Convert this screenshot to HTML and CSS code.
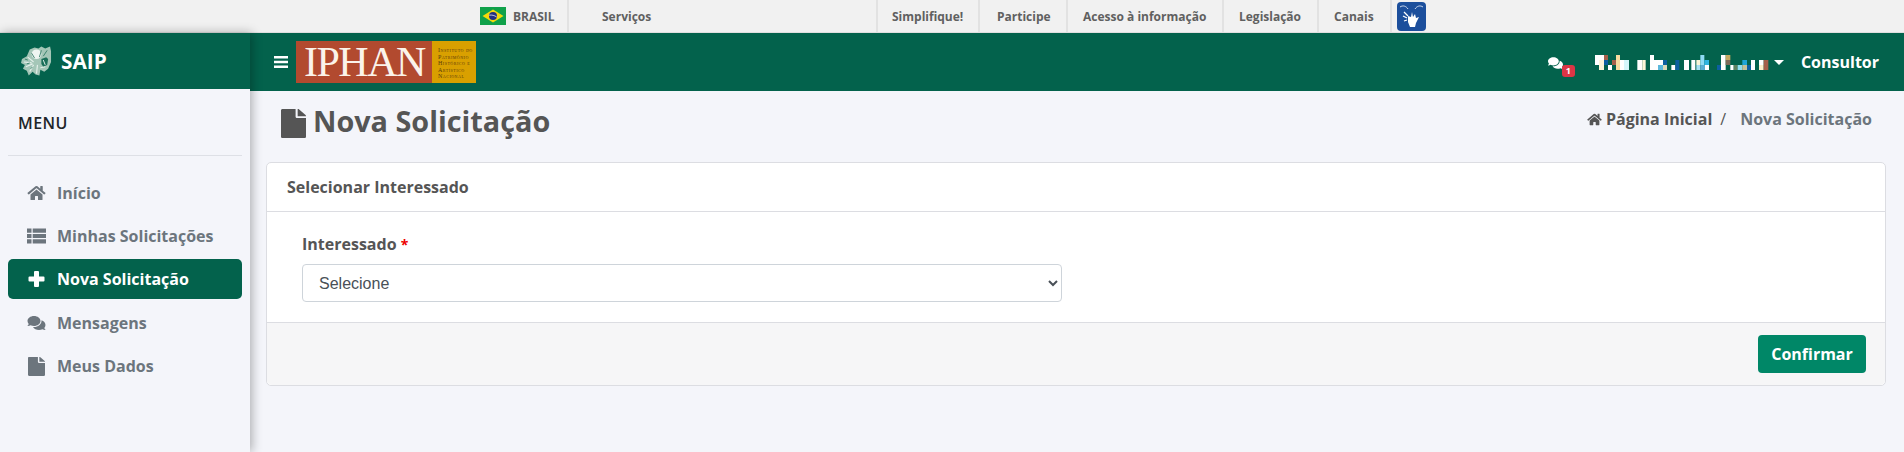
FILE: index.html
```html
<!DOCTYPE html>
<html lang="pt-BR">

<head>
    <meta charset="UTF-8">
    <title>SAIP - Nova Solicitação</title>
    <link rel="stylesheet" href="styles.css">
</head>

<body>
    <!-- barra do governo -->
    <nav class="gov-bar">
        <div class="gov-brasil">
            <svg class="flag" viewBox="0 0 26 18">
                <rect width="26" height="18" fill="#10a14a"></rect>
                <polygon points="13,2.5 23.5,9 13,15.5 2.5,9" fill="#f5d90a"></polygon>
                <circle cx="13" cy="9" r="4" fill="#23307f"></circle>
                <path d="M9.2 8.2c2.6-.4 5.4.2 7.5 1.8" stroke="#fff" stroke-width=".7" fill="none"></path>
            </svg>
            <span>BRASIL</span>
        </div>
        <a class="gov-item gov-servicos">Serviços</a>
        <a class="gov-item gov-w1">Simplifique!</a>
        <a class="gov-item gov-w2">Participe</a>
        <a class="gov-item gov-w3">Acesso à informação</a>
        <a class="gov-item gov-w4">Legislação</a>
        <a class="gov-item gov-w5">Canais</a>
        <svg class="libras" viewBox="0 0 29 29">
            <rect width="29" height="29" rx="4" fill="#1c4f9c"></rect>
            <path d="M3 5c3-2 6-1 8 2M26 5c-3-2-6-1-8 2" stroke="#dfe8f5" stroke-width=".9" fill="none"></path>
            <path d="M11 14l3 1 1-5 1 5 2-3 1 4 3-1-3 6-1 4h-5l-2-5z" fill="#fff"></path>
            <path d="M7 10l4 4M6 14l4 2M7 19l3-1" stroke="#fff" stroke-width="1.3"></path>
        </svg>
    </nav>

    <div class="app">
        <aside class="sidebar">
            <div class="brand">
                <svg class="brand-logo" viewBox="0 0 32 32">
                    <polygon points="1,14 6,11 9,4 14,2 18,3 21,1 25,3 30,1 31,6 31,17 28,24 24,27 20,25 19,31 15,30 12,27 8,31 6,26 2,24 4,20 0,18" fill="#a4c6b7"></polygon>
                    <circle cx="16" cy="9" r="5" fill="#eef5f1"></circle>
                    <path d="M3 17l8 1M5 22l7-3M9 27l4-7M7 12l6 5M16 29l1-9" stroke="#e3efe9" stroke-width="1.2" fill="none"></path>
                    <path d="M4 14l3 1M6 19l3-1M10 24l2-2M11 8l3 5M21 5l-2 7M27 5l-4 6" stroke="#2f7a64" stroke-width=".9" fill="none"></path>
                    <polygon points="21,14 26,12 28,14 27,20 23,22 21,19" fill="#1a6f59"></polygon>
                    <path d="M23 15l2 5M20 23l5-1" stroke="#e3efe9" stroke-width="1"></path>
                </svg>
                <span>SAIP</span>
            </div>
            <div class="menu-title">MENU</div>
            <ul class="menu">
                <li>
                    <svg class="menu-icon" viewBox="0 0 576 512"><path d="M280.37 148.26L96 300.11V464a16 16 0 0 0 16 16l112.06-.29a16 16 0 0 0 15.92-16V368a16 16 0 0 1 16-16h64a16 16 0 0 1 16 16v95.64a16 16 0 0 0 16 16.05L464 480a16 16 0 0 0 16-16V300L295.67 148.26a12.19 12.19 0 0 0-15.3 0zM571.6 251.47L488 182.56V44.05a12 12 0 0 0-12-12h-56a12 12 0 0 0-12 12v72.61L318.47 43a48 48 0 0 0-61 0L4.34 251.47a12 12 0 0 0-1.6 16.9l25.5 31A12 12 0 0 0 45.15 301l235.22-193.74a12.19 12.19 0 0 1 15.3 0L530.9 301a12 12 0 0 0 16.9-1.6l25.5-31a12 12 0 0 0-1.7-16.93z"></path></svg>
                    Início
                </li>
                <li>
                    <svg class="menu-icon" viewBox="0 0 19 16"><path d="M0 .5h4.5v4.2H0zM5.700 .5H19v4.200H5.700zM0 5.900h4.500v4.200H0zM5.700 5.900H19v4.200H5.700zM0 11.300h4.500v4.200H0zM5.700 11.300H19v4.200H5.700z"></path></svg>
                    Minhas Solicitações
                </li>
                <li class="active">
                    <svg class="menu-icon" viewBox="0 0 19 16"><path d="M8 0h3a1 1 0 0 1 1 1v4.500h4.500a1 1 0 0 1 1 1v3a1 1 0 0 1-1 1H12V15a1 1 0 0 1-1 1H8a1 1 0 0 1-1-1v-4.500H2.500a1 1 0 0 1-1-1v-3a1 1 0 0 1 1-1H7V1a1 1 0 0 1 1-1z"></path></svg>
                    Nova Solicitação
                </li>
                <li>
                    <svg class="menu-icon" viewBox="0 0 576 512"><path d="M416 192c0-88.4-93.1-160-208-160S0 103.6 0 192c0 34.3 14.1 65.9 38 92-13.4 30.2-35.5 54.2-35.8 54.5-2.2 2.3-2.8 5.7-1.5 8.7S4.8 352 8 352c36.6 0 66.9-12.3 88.7-25 32.2 15.7 70.3 25 111.3 25 114.9 0 208-71.6 208-160zm122 220c23.9-26 38-57.7 38-92 0-66.9-53.5-124.2-129.3-148.1.9 6.6 1.3 13.3 1.3 20.1 0 105.9-107.7 192-240 192-10.8 0-21.3-.8-31.7-1.9C207.8 439.6 281.8 480 368 480c41 0 79.1-9.2 111.3-25 21.8 12.7 52.1 25 88.7 25 3.2 0 6.1-1.9 7.3-4.8 1.3-2.9.7-6.3-1.5-8.7-.3-.3-22.4-24.2-35.8-54.5z"></path></svg>
                    Mensagens
                </li>
                <li>
                    <svg class="menu-icon icon-file" viewBox="0 0 384 512" preserveAspectRatio="none"><path d="M224 136V0H24C10.7 0 0 10.7 0 24v464c0 13.3 10.7 24 24 24h336c13.3 0 24-10.7 24-24V160H248c-13.2 0-24-10.8-24-24zm160-14.1v6.1H256V0h6.1c6.4 0 12.5 2.5 17 7l97.9 98c4.5 4.5 7 10.6 7 16.9z"></path></svg>
                    Meus Dados
                </li>
            </ul>
        </aside>

        <div class="main">
            <header class="topbar">
                <svg class="burger" viewBox="0 0 14 12"><path d="M0 0h14v2.4H0zM0 4.8h14v2.4H0zM0 9.6h14V12H0z"></path></svg>
                <div class="iphan">
                    <span class="iphan-name">IPHAN</span>
                    <span class="iphan-desc">Instituto do<br>Patrimônio<br>Histórico e<br>Artístico<br>Nacional</span>
                </div>
                <div class="topbar-right">
                    <div class="chat">
                        <svg class="chat-icon" viewBox="0 0 576 512"><path d="M416 192c0-88.4-93.1-160-208-160S0 103.6 0 192c0 34.3 14.1 65.9 38 92-13.4 30.2-35.5 54.2-35.8 54.5-2.2 2.3-2.8 5.7-1.5 8.7S4.8 352 8 352c36.6 0 66.9-12.3 88.7-25 32.2 15.7 70.3 25 111.3 25 114.9 0 208-71.6 208-160zm122 220c23.9-26 38-57.7 38-92 0-66.9-53.5-124.2-129.3-148.1.9 6.6 1.3 13.3 1.3 20.1 0 105.9-107.7 192-240 192-10.8 0-21.3-.8-31.7-1.9C207.8 439.6 281.8 480 368 480c41 0 79.1-9.2 111.3-25 21.8 12.7 52.1 25 88.7 25 3.2 0 6.1-1.9 7.3-4.8 1.3-2.9.7-6.3-1.5-8.7-.3-.3-22.4-24.2-35.8-54.5z"></path></svg>
                        <span class="badge">1</span>
                    </div>
                    <!-- nome borrado no original -->
                    <svg class="user-blur" width="176" height="16" viewBox="18 20 528 48">
                        <rect x="18" y="20" width="27" height="30" fill="#fff"></rect>
                        <rect x="30" y="35" width="15" height="30" fill="#fdf6d8"></rect>
                        <rect x="45" y="20" width="12" height="15" fill="#a5604a"></rect>
                        <rect x="45" y="35" width="12" height="15" fill="#0d5fa0"></rect>
                        <rect x="57" y="50" width="12" height="15" fill="#fff"></rect>
                        <rect x="69" y="35" width="12" height="15" fill="#a5604a"></rect>
                        <rect x="81" y="20" width="12" height="45" fill="#f7dca0"></rect>
                        <rect x="93" y="35" width="12" height="30" fill="#fff"></rect>
                        <rect x="105" y="35" width="15" height="30" fill="#d5f6fb"></rect>
                        <rect x="145" y="35" width="15" height="30" fill="#fff"></rect>
                        <rect x="160" y="35" width="10" height="30" fill="#fdf6d8"></rect>
                        <rect x="183" y="20" width="12" height="45" fill="#fff"></rect>
                        <rect x="195" y="35" width="12" height="30" fill="#fff"></rect>
                        <rect x="207" y="35" width="15" height="15" fill="#fff"></rect>
                        <rect x="222" y="35" width="12" height="15" fill="#0d5fa0"></rect>
                        <rect x="207" y="50" width="15" height="15" fill="#5cb8dc"></rect>
                        <rect x="222" y="50" width="12" height="15" fill="#dcd9b8"></rect>
                        <rect x="247" y="50" width="12" height="15" fill="#fff"></rect>
                        <rect x="259" y="35" width="12" height="30" fill="#0d5fa0"></rect>
                        <rect x="285" y="35" width="15" height="30" fill="#fff"></rect>
                        <rect x="307" y="35" width="12" height="30" fill="#fff"></rect>
                        <rect x="322" y="35" width="12" height="15" fill="#fdf6d8"></rect>
                        <rect x="334" y="20" width="12" height="30" fill="#8fdcf5"></rect>
                        <rect x="346" y="35" width="14" height="15" fill="#2fb4e0"></rect>
                        <rect x="322" y="50" width="12" height="15" fill="#a8e0f2"></rect>
                        <rect x="334" y="50" width="14" height="15" fill="#58aed2"></rect>
                        <rect x="348" y="50" width="12" height="15" fill="#fff"></rect>
                        <rect x="384" y="50" width="12" height="15" fill="#0d5fa0"></rect>
                        <rect x="396" y="20" width="14" height="45" fill="#fff"></rect>
                        <rect x="410" y="20" width="14" height="15" fill="#c4a860"></rect>
                        <rect x="410" y="35" width="14" height="15" fill="#7d6a5a"></rect>
                        <rect x="424" y="50" width="10" height="15" fill="#fff"></rect>
                        <rect x="434" y="50" width="12" height="15" fill="#5f8260"></rect>
                        <rect x="446" y="50" width="14" height="15" fill="#90dcef"></rect>
                        <rect x="460" y="35" width="14" height="15" fill="#1ea4d8"></rect>
                        <rect x="460" y="50" width="14" height="15" fill="#c4c09a"></rect>
                        <rect x="474" y="50" width="12" height="15" fill="#0d5fa0"></rect>
                        <rect x="486" y="35" width="12" height="30" fill="#fff"></rect>
                        <rect x="510" y="35" width="14" height="15" fill="#fff"></rect>
                        <rect x="510" y="50" width="14" height="15" fill="#fdf0cc"></rect>
                        <rect x="524" y="35" width="14" height="30" fill="#a5604a"></rect>
                    </svg>
                    <span class="caret"></span>
                    <span class="role">Consultor</span>
                </div>
            </header>

            <div class="page-head">
                <h1>
                    <svg class="title-icon" viewBox="0 0 384 512" preserveAspectRatio="none"><path d="M224 136V0H24C10.7 0 0 10.7 0 24v464c0 13.3 10.7 24 24 24h336c13.3 0 24-10.7 24-24V160H248c-13.2 0-24-10.8-24-24zm160-14.1v6.1H256V0h6.1c6.4 0 12.5 2.5 17 7l97.9 98c4.5 4.5 7 10.6 7 16.9z"></path></svg>
                    Nova Solicitação
                </h1>
                <div class="breadcrumb">
                    <svg class="crumb-icon" viewBox="0 0 576 512"><path d="M280.37 148.26L96 300.11V464a16 16 0 0 0 16 16l112.06-.29a16 16 0 0 0 15.92-16V368a16 16 0 0 1 16-16h64a16 16 0 0 1 16 16v95.64a16 16 0 0 0 16 16.05L464 480a16 16 0 0 0 16-16V300L295.67 148.26a12.19 12.19 0 0 0-15.3 0zM571.6 251.47L488 182.56V44.05a12 12 0 0 0-12-12h-56a12 12 0 0 0-12 12v72.61L318.47 43a48 48 0 0 0-61 0L4.34 251.47a12 12 0 0 0-1.6 16.9l25.5 31A12 12 0 0 0 45.15 301l235.22-193.74a12.19 12.19 0 0 1 15.3 0L530.9 301a12 12 0 0 0 16.9-1.6l25.5-31a12 12 0 0 0-1.7-16.93z"></path></svg>
                    <a>Página Inicial</a>
                    <span class="crumb-sep">/</span>
                    <span class="crumb-current">Nova Solicitação</span>
                </div>
            </div>

            <section class="card">
                <div class="card-header">Selecionar Interessado</div>
                <div class="card-body">
                    <label class="field-label" for="interessado">Interessado <span class="required">*</span></label>
                    <select class="field-select" id="interessado">
                        <option>Selecione</option>
                    </select>
                </div>
                <div class="card-footer">
                    <button class="btn-confirm">Confirmar</button>
                </div>
            </section>
        </div>
    </div>
</body>

</html>
```

FILE: styles.css
```css
html,
body {
    height: 100%;
    margin: 0;
}

body {
    background: #f4f5fa;
    font-family: "Open Sans", "Liberation Sans", sans-serif;
    overflow: hidden;
    display: flex;
    flex-direction: column;
}

/* barra do governo */
.gov-bar {
    height: 33px;
    box-sizing: border-box;
    flex: none;
    background: #f1f1f1;
    border-bottom: 1px solid #dfdfdf;
    display: flex;
    align-items: stretch;
    padding-left: 480px;
    font-size: 12px;
    font-weight: 700;
    color: #606060;
}

.gov-brasil {
    width: 89px;
    box-sizing: border-box;
    display: flex;
    align-items: center;
    gap: 7px;
    border-right: 2px solid #e2e2e2;
}

.flag {
    width: 26px;
    height: 18px;
}

.gov-item {
    display: flex;
    align-items: center;
    box-sizing: border-box;
    border-right: 2px solid #e2e2e2;
    padding-left: 14px;
}

.gov-servicos {
    width: 309px;
    padding-left: 33px;
}

.gov-w1 { width: 102px; }
.gov-w2 { width: 88px; padding-left: 17px; }
.gov-w3 { width: 156px; padding-left: 15px; }
.gov-w4 { width: 95px; padding-left: 15px; }
.gov-w5 { width: 73px; padding-left: 15px; }

.libras {
    width: 29px;
    height: 29px;
    margin: 2px 0 0 5px;
}

.app {
    flex: 1;
    display: flex;
    min-height: 0;
}

/* menu lateral */
.sidebar {
    width: 250px;
    flex: none;
    background: #f4f5fa;
    box-shadow: 2px 0 10px rgba(0, 0, 0, 0.3);
    position: relative;
    z-index: 2;
}

.brand {
    height: 56px;
    background: #03624c;
    display: flex;
    align-items: center;
    padding-left: 21px;
    gap: 9px;
    color: #fff;
    font-size: 20.8px;
    font-weight: 700;
}

.brand-logo {
    width: 31px;
    height: 32px;
}

.menu-title {
    margin: 0 8px;
    height: 67px;
    line-height: 69px;
    padding-left: 10px;
    box-sizing: border-box;
    border-bottom: 1px solid #dee0e6;
    font-size: 16px;
    font-weight: 600;
    letter-spacing: .4px;
    color: #212529;
}

.menu {
    list-style: none;
    margin: 0;
    padding: 16px 8px 0;
}

.menu li {
    height: 40px;
    margin-bottom: 3.3px;
    box-sizing: border-box;
    padding: 2px 0 0 19px;
    display: flex;
    align-items: center;
    border-radius: 5px;
    font-size: 16px;
    font-weight: 700;
    color: #6c757d;
}

.menu li.active {
    padding-top: 0;
    background: #03624c;
    color: #fff;
}

.menu-icon {
    width: 19px;
    height: 16px;
    margin-right: 11px;
    fill: #6c757d;
    flex: none;
}

.active .menu-icon {
    fill: #fff;
}

.icon-file {
    width: 17px;
    height: 19px;
    margin-left: 1px;
    margin-right: 12px;
}

/* conteudo */
.main {
    flex: 1;
    min-width: 0;
    display: flex;
    flex-direction: column;
}

.topbar {
    height: 58px;
    flex: none;
    background: #03624c;
    box-sizing: border-box;
    display: flex;
    align-items: center;
    padding-left: 24px;
}

.burger {
    width: 14px;
    height: 12px;
    fill: #fff;
    margin-right: 8px;
}

.iphan {
    width: 180px;
    height: 42px;
    display: flex;
}

.iphan-name {
    width: 136px;
    background: #b24a2f;
    color: #fbf3ea;
    font-family: "Liberation Serif", serif;
    font-size: 42px;
    line-height: 42px;
    letter-spacing: -1.5px;
    padding-left: 8px;
    box-sizing: border-box;
}

.iphan-desc {
    flex: 1;
    background: #d9a000;
    color: #5b3c0c;
    font-family: "Liberation Serif", serif;
    font-variant: small-caps;
    font-size: 6px;
    line-height: 6.5px;
    letter-spacing: .5px;
    padding: 6px 0 0 6px;
    white-space: nowrap;
}

.topbar-right {
    margin-left: auto;
    display: flex;
    align-items: center;
    color: #fff;
    padding-right: 25px;
}

.chat {
    position: relative;
    width: 15px;
    height: 14px;
    margin: 2px 32px 0 0;
}

.chat-icon {
    width: 15px;
    height: 14px;
    fill: #fff;
    display: block;
}

.badge {
    position: absolute;
    left: 14px;
    top: 9px;
    width: 13px;
    height: 12px;
    border-radius: 3px;
    background: #dc3545;
    font-size: 9px;
    font-weight: 700;
    line-height: 12px;
    text-align: center;
}

.user-blur {
    margin-top: 1px;
}

.caret {
    width: 0;
    height: 0;
    border: 5px solid transparent;
    border-top-color: #fff;
    border-bottom-width: 0;
    margin: 0 17px 0 3px;
}

.role {
    font-size: 16px;
    font-weight: 700;
}

.page-head {
    height: 71px;
    flex: none;
    box-sizing: border-box;
    display: flex;
    justify-content: space-between;
    align-items: center;
    padding: 0 32px 12px 31px;
}

h1 {
    margin: 0;
    font-size: 28.8px;
    font-weight: 700;
    color: #555;
    display: flex;
    align-items: center;
    gap: 7px;
}

.title-icon {
    width: 25px;
    height: 29px;
    margin-top: 5px;
    fill: #555;
}

.breadcrumb {
    display: flex;
    align-items: center;
    font-size: 16px;
    font-weight: 700;
    color: #555;
    margin-top: -3px;
}

.crumb-icon {
    width: 15px;
    height: 13px;
    fill: #555;
    margin-right: 4px;
}

.crumb-sep {
    margin: 0 14px 0 8px;
    font-weight: 400;
}

.crumb-current {
    color: #6c757d;
}

.card {
    margin: 0 18px 0 16px;
    background: #fff;
    border: 1px solid #dcdde2;
    border-radius: 5px;
    box-sizing: border-box;
    height: 224px;
    display: flex;
    flex-direction: column;
}

.card-header {
    height: 49px;
    flex: none;
    box-sizing: border-box;
    border-bottom: 1px solid #dcdde2;
    padding-left: 20px;
    line-height: 49px;
    font-size: 16px;
    font-weight: 700;
    color: #555;
}

.card-body {
    flex: 1;
    padding: 19px 0 0 35px;
}

.field-label {
    display: block;
    font-size: 16px;
    font-weight: 700;
    color: #555;
    height: 33px;
    line-height: 26px;
}

.required {
    color: #e00;
    font-size: 14px;
}

.field-select {
    display: block;
    width: 760px;
    height: 38px;
    padding: 0 12px;
    background-color: #fff;
    border: 1px solid #ced4da;
    border-radius: 4px;
    font-family: "Liberation Sans", Arial, sans-serif;
    font-size: 16px;
    color: #495057;
}

.card-footer {
    height: 63px;
    flex: none;
    box-sizing: border-box;
    background: #f6f6f7;
    border-top: 1px solid #dcdde2;
    border-radius: 0 0 5px 5px;
    display: flex;
    justify-content: flex-end;
    align-items: center;
    padding-right: 19px;
}

.btn-confirm {
    width: 108px;
    height: 38px;
    border: none;
    border-radius: 4px;
    background: #008767;
    color: #fff;
    font-family: inherit;
    font-size: 16px;
    font-weight: 700;
}
```
